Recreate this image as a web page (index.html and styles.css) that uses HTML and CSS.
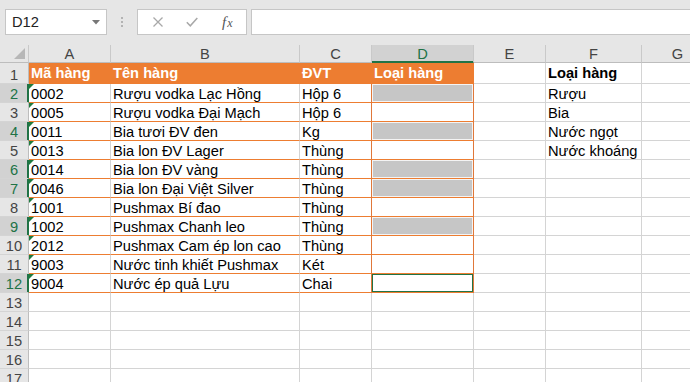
FILE: index.html
```html
<!DOCTYPE html>
<html lang="vi">
<head>
<meta charset="utf-8">
<title>Excel</title>
<link rel="stylesheet" href="styles.css">
</head>
<body>
<div class="app">
  <div class="fbar">
    <div class="namebox"><span>D12</span><svg class="dd" width="8" height="5" viewBox="0 0 8 5"><polygon points="0,0 8,0 4,4.5" fill="#777"/></svg></div>
    <div class="grip"><i></i><i></i><i></i></div>
    <div class="fbtns">
      <svg class="ico-x" width="10" height="10" viewBox="0 0 10 10"><path d="M0.5 0.5 L9.5 9.5 M9.5 0.5 L0.5 9.5" stroke="#a8a8a8" stroke-width="1.3" fill="none"/></svg>
      <svg class="ico-ok" width="12" height="10" viewBox="0 0 12 10"><path d="M0.8 5.2 L4.3 8.8 L11.3 1" stroke="#a8a8a8" stroke-width="1.5" fill="none"/></svg>
      <span class="fx"><i>f</i><i class="sub">x</i></span>
    </div>
    <div class="finput"></div>
  </div>
  <div class="sheet">
    <div class="grid">
      <!-- column headers -->
      <div class="ch corner"><svg width="12" height="12" viewBox="0 0 12 12"><polygon points="11,0 11,11 0,11" fill="#b7b7b7"/></svg></div>
      <div class="ch">A</div><div class="ch">B</div><div class="ch">C</div><div class="ch hl">D</div><div class="ch">E</div><div class="ch">F</div><div class="ch">G</div>

      <!-- row 1 -->
      <div class="rh">1</div>
      <div class="c t h">Mã hàng</div><div class="c t h">Tên hàng</div><div class="c t h">ĐVT</div><div class="c t h">Loại hàng</div>
      <div class="c r1"></div><div class="c r1 b">Loại hàng</div><div class="c r1"></div>

      <!-- row 2 -->
      <div class="rh hl">2</div>
      <div class="c t tri">0002</div><div class="c t">Rượu vodka Lạc Hồng</div><div class="c t oc">Hộp 6</div><div class="c t oc"><div class="sel"></div></div>
      <div class="c"></div><div class="c">Rượu</div><div class="c"></div>

      <!-- row 3 -->
      <div class="rh">3</div>
      <div class="c t tri">0005</div><div class="c t">Rượu vodka Đại Mạch</div><div class="c t oc">Hộp 6</div><div class="c t oc"></div>
      <div class="c"></div><div class="c">Bia</div><div class="c"></div>

      <!-- row 4 -->
      <div class="rh hl">4</div>
      <div class="c t tri">0011</div><div class="c t">Bia tươi ĐV đen</div><div class="c t oc">Kg</div><div class="c t oc"><div class="sel"></div></div>
      <div class="c"></div><div class="c">Nước ngọt</div><div class="c"></div>

      <!-- row 5 -->
      <div class="rh">5</div>
      <div class="c t tri">0013</div><div class="c t">Bia lon ĐV Lager</div><div class="c t oc">Thùng</div><div class="c t oc"></div>
      <div class="c"></div><div class="c">Nước khoáng</div><div class="c"></div>

      <!-- row 6 -->
      <div class="rh hl">6</div>
      <div class="c t tri">0014</div><div class="c t">Bia lon ĐV vàng</div><div class="c t oc">Thùng</div><div class="c t oc"><div class="sel"></div></div>
      <div class="c"></div><div class="c"></div><div class="c"></div>

      <!-- row 7 -->
      <div class="rh hl">7</div>
      <div class="c t tri">0046</div><div class="c t">Bia lon Đại Việt Silver</div><div class="c t oc">Thùng</div><div class="c t oc"><div class="sel"></div></div>
      <div class="c"></div><div class="c"></div><div class="c"></div>

      <!-- row 8 -->
      <div class="rh">8</div>
      <div class="c t tri">1001</div><div class="c t">Pushmax Bí đao</div><div class="c t oc">Thùng</div><div class="c t oc"></div>
      <div class="c"></div><div class="c"></div><div class="c"></div>

      <!-- row 9 -->
      <div class="rh hl">9</div>
      <div class="c t tri">1002</div><div class="c t">Pushmax Chanh leo</div><div class="c t oc">Thùng</div><div class="c t oc"><div class="sel"></div></div>
      <div class="c"></div><div class="c"></div><div class="c"></div>

      <!-- row 10 -->
      <div class="rh">10</div>
      <div class="c t tri">2012</div><div class="c t">Pushmax Cam ép lon cao</div><div class="c t oc">Thùng</div><div class="c t oc"></div>
      <div class="c"></div><div class="c"></div><div class="c"></div>

      <!-- row 11 -->
      <div class="rh">11</div>
      <div class="c t tri">9003</div><div class="c t">Nước tinh khiết Pushmax</div><div class="c t oc">Két</div><div class="c t oc"></div>
      <div class="c"></div><div class="c"></div><div class="c"></div>

      <!-- row 12 -->
      <div class="rh hl">12</div>
      <div class="c t tri">9004</div><div class="c t">Nước ép quả Lựu</div><div class="c t oc">Chai</div><div class="c t oc"><div class="active"></div></div>
      <div class="c"></div><div class="c"></div><div class="c"></div>

      <!-- rows 13-17 -->
      <div class="rh">13</div><div class="c"></div><div class="c"></div><div class="c"></div><div class="c"></div><div class="c"></div><div class="c"></div><div class="c"></div>
      <div class="rh">14</div><div class="c"></div><div class="c"></div><div class="c"></div><div class="c"></div><div class="c"></div><div class="c"></div><div class="c"></div>
      <div class="rh">15</div><div class="c"></div><div class="c"></div><div class="c"></div><div class="c"></div><div class="c"></div><div class="c"></div><div class="c"></div>
      <div class="rh">16</div><div class="c"></div><div class="c"></div><div class="c"></div><div class="c"></div><div class="c"></div><div class="c"></div><div class="c"></div>
      <div class="rh">17</div><div class="c"></div><div class="c"></div><div class="c"></div><div class="c"></div><div class="c"></div><div class="c"></div><div class="c"></div>
    </div>
  </div>
</div>
</body>
</html>
```

FILE: styles.css
```css
* { box-sizing: border-box; }
html, body { margin: 0; padding: 0; }
body {
  width: 690px;
  height: 382px;
  overflow: hidden;
  background: #ffffff;
  font-family: "Liberation Sans", Arial, sans-serif;
  font-size: 14.67px;
  color: #000;
}
.app { width: 690px; height: 382px; overflow: hidden; }

/* formula bar */
.fbar {
  height: 45px;
  background: #e6e6e6;
  display: flex;
  align-items: flex-start;
  padding: 9px 0 0 5px;
}
.namebox {
  width: 102px;
  height: 26px;
  border: 1px solid #c6c6c6;
  background: #fff;
  display: flex;
  align-items: center;
  justify-content: space-between;
  padding: 0 6px 0 6px;
  color: #222;
  font-size: 14.67px;
}
.namebox .dd { margin-top: 1px; }
.grip {
  width: 30px;
  height: 26px;
  display: flex;
  flex-direction: column;
  align-items: center;
  justify-content: center;
  gap: 2px;
}
.grip i { display: block; width: 2px; height: 2px; background: #b3b3b3; }
.fbtns {
  width: 110px;
  height: 26px;
  border: 1px solid #c6c6c6;
  background: #fff;
  display: flex;
  align-items: center;
  padding-left: 15px;
}
.ico-ok { margin-left: 23px; }
.fx {
  margin-left: 24px;
  font-family: "Liberation Serif", "Times New Roman", serif;
  font-style: italic;
  font-size: 15px;
  color: #555;
  line-height: 1;
  white-space: nowrap;
}
.fx i { font-style: italic; }
.fx .sub { font-size: 12px; margin-left: 1px; }
.finput {
  flex: 1;
  margin-left: 4px;
  height: 26px;
  border: 1px solid #c6c6c6;
  border-right: none;
  background: #fff;
}

/* sheet grid */
.sheet { width: 690px; overflow: hidden; }
.grid {
  display: grid;
  width: 714px;
  grid-template-columns: 29px 82px 189px 72px 102px 72px 96px 72px;
  grid-template-rows: 18px 21px repeat(16, 19px);
}
.ch {
  background: #e6e6e6;
  border-right: 1px solid #c9c9c9;
  border-bottom: 1px solid #bdbdbd;
  color: #444;
  display: flex;
  justify-content: center;
  align-items: flex-start;
  padding-top: 2px;
  line-height: 15px;
}
.ch.hl {
  background: #d2d2d2;
  color: #217346;
  border-bottom-color: #217346;
  box-shadow: inset 0 -1px 0 #217346;
}
.corner {
  padding: 0;
  justify-content: flex-end;
  align-items: flex-end;
}
.corner svg { margin: 0 2px 2px 0; }
.rh {
  background: #e6e6e6;
  border-right: 1px solid #bdbdbd;
  border-bottom: 1px solid #d4d4d4;
  color: #444;
  display: flex;
  justify-content: center;
  align-items: flex-end;
  line-height: 16px;
}
.rh.hl {
  background: #d2d2d2;
  color: #217346;
  border-right-color: #217346;
  box-shadow: inset -1px 0 0 #217346;
}
.c {
  border-right: 1px solid #d4d4d4;
  border-bottom: 1px solid #d4d4d4;
  padding-left: 2px;
  display: flex;
  align-items: flex-end;
  line-height: 16px;
  white-space: nowrap;
  position: relative;
}
.t { border-bottom-color: #ed7d31; }
.h {
  background: #ed7d31;
  border-right-color: #ed7d31;
  color: #fff;
  font-weight: bold;
  padding-bottom: 2px;
}
.r1 { padding-bottom: 2px; }
.b { font-weight: bold; }
.oc { border-right-color: #e0783a; }
.tri::before {
  content: "";
  position: absolute;
  left: 0;
  top: 0;
  width: 0;
  height: 0;
  border-top: 5px solid #1e7b3f;
  border-right: 5px solid transparent;
}
.oc > .sel, .oc > .active {
  position: absolute;
  left: 0;
  top: 0;
  right: 0;
  bottom: 0;
}
.sel {
  background: #c6c6c6;
  border: 1px solid #f4f4f4;
}
.active {
  border: 1px solid #217346;
  background: #fff;
}
```
